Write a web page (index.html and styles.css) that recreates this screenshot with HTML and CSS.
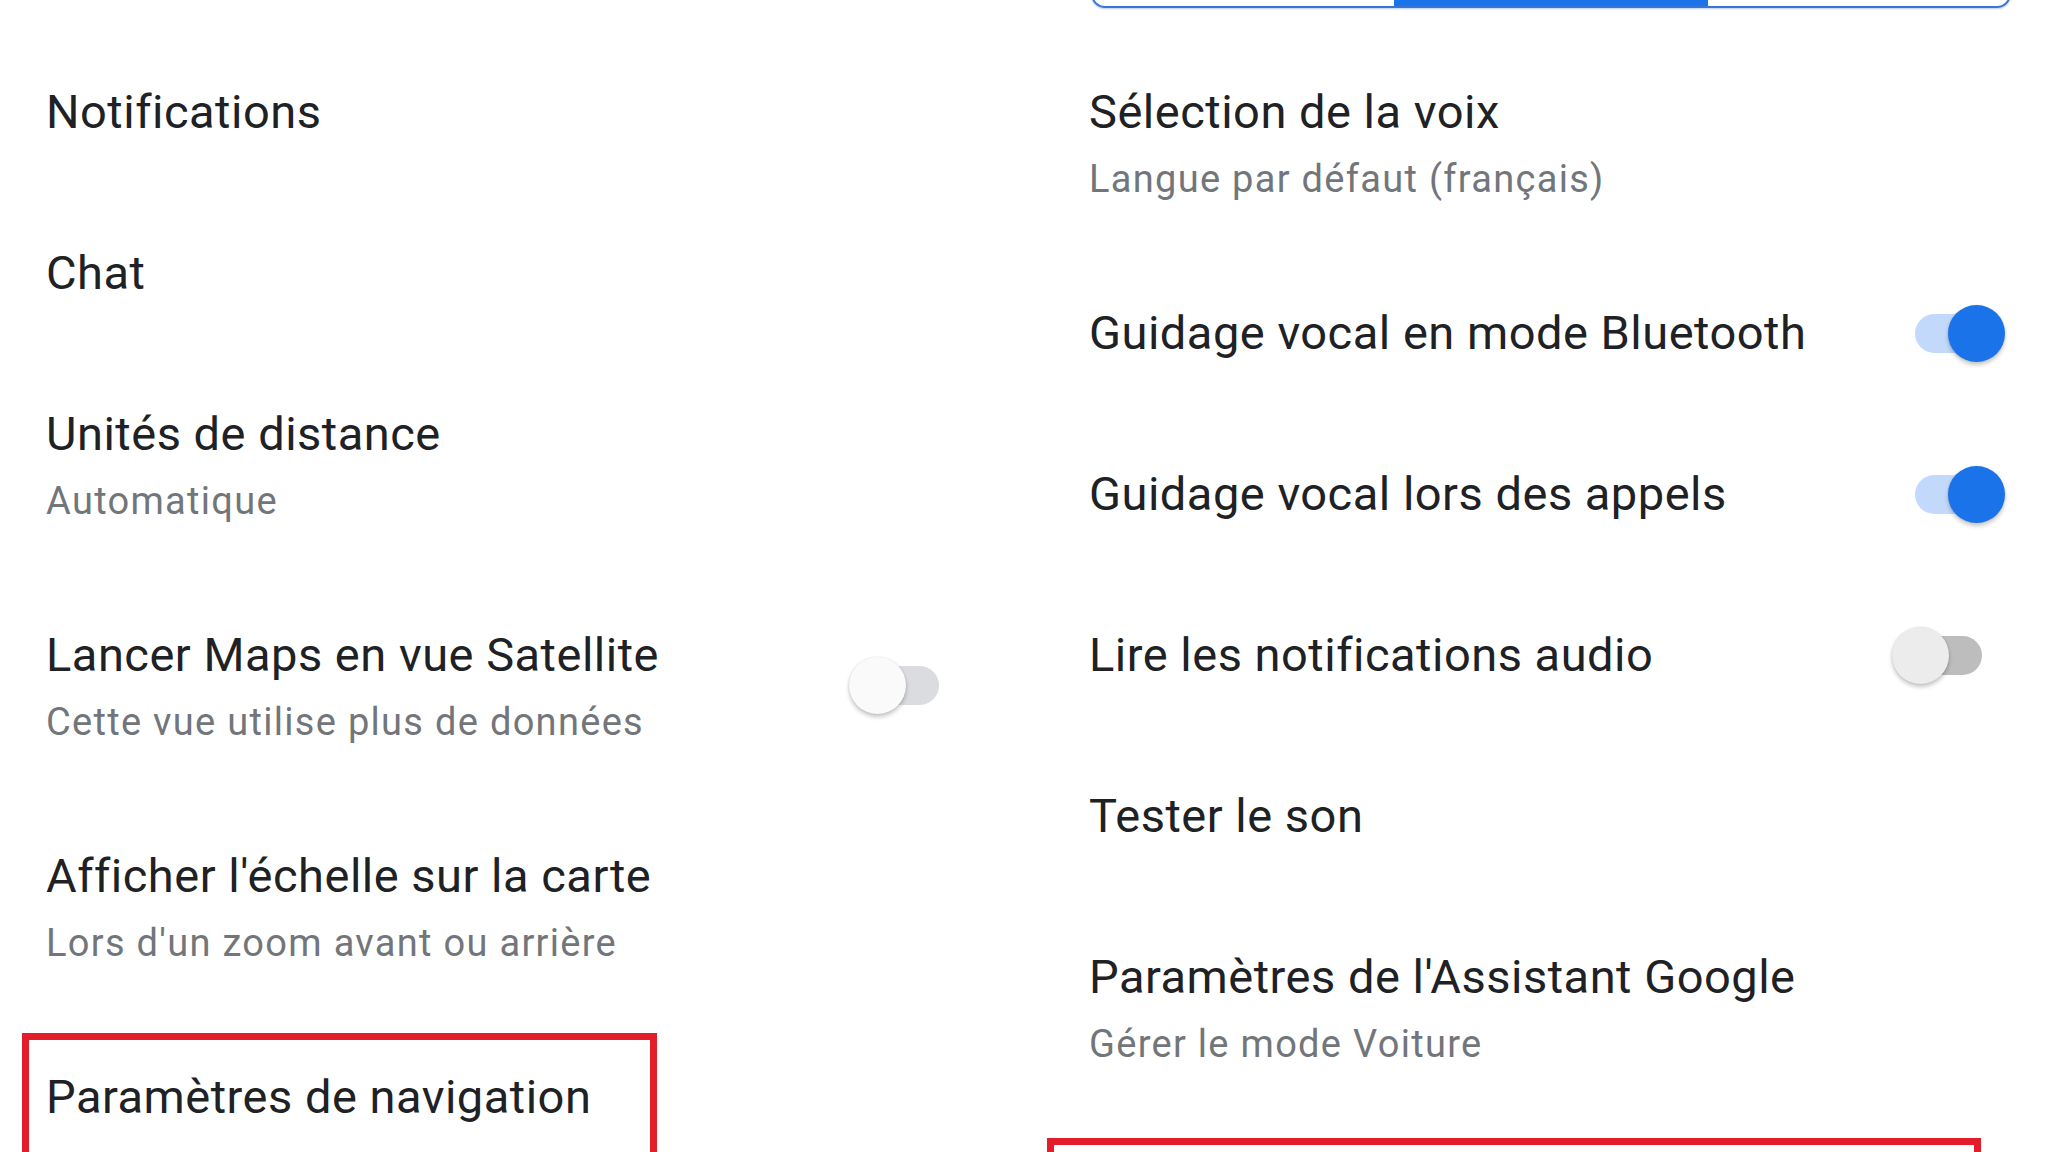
FILE: index.html
```html
<!DOCTYPE html>
<html lang="fr">
<head>
<meta charset="utf-8">
<title>Paramètres</title>
<link rel="stylesheet" href="styles.css">
</head>
<body>
<div class="page">
  <section class="column column-left">
    <ul class="list">
      <li class="item"><div class="text"><div class="title">Notifications</div></div></li>
      <li class="item"><div class="text"><div class="title">Chat</div></div></li>
      <li class="item"><div class="text"><div class="title">Unités de distance</div><div class="sub">Automatique</div></div></li>
      <li class="item"><div class="text"><div class="title">Lancer Maps en vue Satellite</div><div class="sub">Cette vue utilise plus de données</div></div><span class="switch switch-off switch-light"></span></li>
      <li class="item"><div class="text"><div class="title">Afficher l'échelle sur la carte</div><div class="sub">Lors d'un zoom avant ou arrière</div></div></li>
      <li class="item item-marked"><div class="text"><div class="title">Paramètres de navigation</div></div><span class="mark mark-left"></span></li>
    </ul>
  </section>
  <section class="column column-right">
    <div class="segmented">
      <span class="seg"></span>
      <span class="seg seg-active"></span>
      <span class="seg"></span>
    </div>
    <ul class="list list-right">
      <li class="item"><div class="text"><div class="title">Sélection de la voix</div><div class="sub">Langue par défaut (français)</div></div></li>
      <li class="item"><div class="text"><div class="title">Guidage vocal en mode Bluetooth</div></div><span class="switch switch-on"></span></li>
      <li class="item"><div class="text"><div class="title">Guidage vocal lors des appels</div></div><span class="switch switch-on"></span></li>
      <li class="item"><div class="text"><div class="title">Lire les notifications audio</div></div><span class="switch switch-off switch-grey"></span></li>
      <li class="item"><div class="text"><div class="title">Tester le son</div></div></li>
      <li class="item"><div class="text"><div class="title">Paramètres de l'Assistant Google</div><div class="sub">Gérer le mode Voiture</div></div></li>
      <li class="item item-marked"><div class="text"><div class="title">&nbsp;</div></div><span class="mark mark-right"></span></li>
    </ul>
  </section>
</div>
</body>
</html>
```
FILE: styles.css
```css
html, body {
  margin: 0;
  padding: 0;
  background: #ffffff;
  overflow: hidden;
  height: 1152px;
}

body {
  font-family: Roboto, "Noto Sans", "Liberation Sans", sans-serif;
  color: #202124;
}

.page {
  display: grid;
  grid-template-columns: 922px 922px;
  column-gap: 121px;
  padding: 0 37px 0 46px;
  height: 1152px;
  overflow: hidden;
}

.column {
  display: flex;
  flex-direction: column;
  min-width: 0;
}

.column-left {
  padding-top: 32px;
}

.list {
  list-style: none;
  margin: 0;
  padding: 0;
}

.list-right {
  margin-top: 24px;
}

.item {
  position: relative;
  display: flex;
  align-items: center;
  justify-content: space-between;
  padding: 48px 0 49px;
}

.text {
  flex: 1;
  min-width: 0;
}

.title {
  font-size: 47px;
  line-height: 64px;
  font-weight: 400;
  letter-spacing: 0.5px;
  color: #202124;
  white-space: nowrap;
}

.sub {
  font-size: 38px;
  line-height: 50px;
  margin-top: 10px;
  letter-spacing: 1.3px;
  color: #72767b;
  white-space: nowrap;
}

/* Segmented control cut off at top */
.segmented {
  display: grid;
  grid-template-columns: 1fr 314px 1fr;
  height: 60px;
  margin-top: -52px;
  margin-left: 2px;
  border: 2.5px solid #3a74d4;
  border-radius: 14px;
  overflow: hidden;
  box-sizing: border-box;
  box-shadow: 0 1px 2px rgba(60, 110, 200, 0.35);
}

.seg {
  display: block;
}

.seg-active {
  background: #1a73e8;
}

/* Switches */
.switch {
  position: relative;
  display: block;
  flex: none;
  width: 99px;
  height: 57px;
}

.switch::before {
  content: "";
  position: absolute;
  left: 9px;
  top: 9px;
  width: 81px;
  height: 39px;
  border-radius: 20px;
}

.switch::after {
  content: "";
  position: absolute;
  top: 0;
  width: 57px;
  height: 57px;
  border-radius: 50%;
  box-shadow: 0 3px 4px rgba(0, 0, 0, 0.22), 0 0 2px rgba(0, 0, 0, 0.12);
}

.switch-on {
  margin-right: 6px;
}

.switch-on::before {
  background: #c3d9fb;
}

.switch-on::after {
  right: 0;
  background: #1a73e8;
}

.switch-off {
  margin-right: 20px;
}

.switch-off::after {
  left: 0;
}

.switch-light::before {
  background: #dadce0;
}

.switch-light::after {
  background: #fafafa;
}

.switch-grey::before {
  background: #bdbdbd;
}

.switch-grey::after {
  background: #ececec;
}

/* Red annotation boxes */
.mark {
  position: absolute;
  border: 7px solid #e31e2a;
  box-sizing: border-box;
  pointer-events: none;
}

.mark-left {
  top: 16px;
  left: -24px;
  width: 635px;
  height: 300px;
}

.mark-right {
  top: 20px;
  left: -42px;
  width: 934px;
  height: 300px;
}
```
